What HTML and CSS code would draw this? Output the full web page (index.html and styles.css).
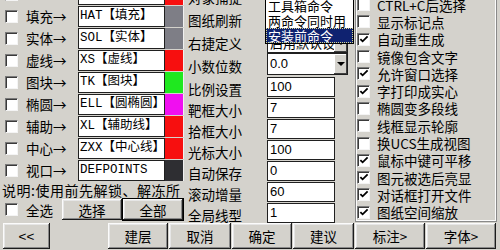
FILE: index.html
```html
<!DOCTYPE html>
<html lang="zh-CN">
<head>
<meta charset="utf-8">
<title>设置</title>
<link rel="stylesheet" href="styles.css">
</head>
<body>
<div class="dlg">
  <div class="main">
    <div class="col-l">
      <div class="layers">
        <div class="lrow"><span class="cb"></span><span class="lbl">&nbsp;</span><span class="tb">&nbsp;</span><span class="sw c-red"></span></div>
        <div class="lrow"><span class="cb"></span><span class="lbl">填充→</span><span class="tb">HAT【填充】</span><span class="sw c-gray"></span></div>
        <div class="lrow"><span class="cb"></span><span class="lbl">实体→</span><span class="tb">SOL【实体】</span><span class="sw c-gray"></span></div>
        <div class="lrow"><span class="cb"></span><span class="lbl">虚线→</span><span class="tb">XS【虚线】</span><span class="sw c-red"></span></div>
        <div class="lrow"><span class="cb"></span><span class="lbl">图块→</span><span class="tb">TK【图块】</span><span class="sw c-green"></span></div>
        <div class="lrow"><span class="cb"></span><span class="lbl">椭圆→</span><span class="tb">ELL【圆椭圆】</span><span class="sw c-mag"></span></div>
        <div class="lrow"><span class="cb"></span><span class="lbl">辅助→</span><span class="tb">XL【辅助线】</span><span class="sw c-red"></span></div>
        <div class="lrow"><span class="cb"></span><span class="lbl">中心→</span><span class="tb">ZXX【中心线】</span><span class="sw c-red"></span></div>
        <div class="lrow"><span class="cb"></span><span class="lbl">视口→</span><span class="tb">DEFPOINTS</span><span class="sw c-dark"></span></div>
      </div>
      <div class="note">说明:使用前先解锁、解冻所</div>
      <div class="selrow">
        <span class="cb"></span><span class="sel-lbl">全选</span>
        <span class="btn b-sel">选择</span>
        <span class="btn b-all">全部</span>
      </div>
    </div>

    <div class="col-m">
      <div class="mgrid">
        <span class="mlbl">对象捕捉</span><span class="combo"><span class="val">&nbsp;</span><span class="arr"></span></span>
        <span class="mlbl">图纸刷新</span><span class="combo"><span class="val">&nbsp;</span><span class="arr"></span></span>
        <span class="mlbl">右捷定义</span><span class="combo c-low"><span class="val">启用默认设置</span><span class="arr"></span></span>
        <span class="mlbl">小数位数</span><span class="combo"><span class="val num-t">0.0</span><span class="arr"></span></span>
        <span class="mlbl">比例设置</span><span class="num">100</span>
        <span class="mlbl">靶框大小</span><span class="num">7</span>
        <span class="mlbl">拾框大小</span><span class="num">7</span>
        <span class="mlbl">光标大小</span><span class="num">100</span>
        <span class="mlbl">自动保存</span><span class="num">0</span>
        <span class="mlbl">滚动增量</span><span class="num">60</span>
        <span class="mlbl">全局线型</span><span class="num">1</span>
      </div>
      <div class="dlist">
        <div class="item">工具箱命令</div>
        <div class="item">两命令同时用</div>
        <div class="item hi">安装前命令</div>
      </div>
    </div>

    <div class="col-r">
      <div class="clist">
        <div class="crow"><span class="cb"></span><span class="clbl">CTRL+C后选择</span></div>
        <div class="crow"><span class="cb"></span><span class="clbl">显示标记点</span></div>
        <div class="crow"><span class="cb"><svg viewBox="0 0 11 11" width="11" height="11"><polyline points="1.5,5 4,7.5 9.5,2" fill="none" stroke="#000" stroke-width="2"/></svg></span><span class="clbl">自动重生成</span></div>
        <div class="crow"><span class="cb"></span><span class="clbl">镜像包含文字</span></div>
        <div class="crow"><span class="cb"><svg viewBox="0 0 11 11" width="11" height="11"><polyline points="1.5,5 4,7.5 9.5,2" fill="none" stroke="#000" stroke-width="2"/></svg></span><span class="clbl">允许窗口选择</span></div>
        <div class="crow"><span class="cb"><svg viewBox="0 0 11 11" width="11" height="11"><polyline points="1.5,5 4,7.5 9.5,2" fill="none" stroke="#000" stroke-width="2"/></svg></span><span class="clbl">字打印成实心</span></div>
        <div class="crow"><span class="cb"></span><span class="clbl">椭圆变多段线</span></div>
        <div class="crow"><span class="cb"></span><span class="clbl">线框显示轮廓</span></div>
        <div class="crow"><span class="cb"></span><span class="clbl">换UCS生成视图</span></div>
        <div class="crow"><span class="cb"><svg viewBox="0 0 11 11" width="11" height="11"><polyline points="1.5,5 4,7.5 9.5,2" fill="none" stroke="#000" stroke-width="2"/></svg></span><span class="clbl">鼠标中键可平移</span></div>
        <div class="crow"><span class="cb"><svg viewBox="0 0 11 11" width="11" height="11"><polyline points="1.5,5 4,7.5 9.5,2" fill="none" stroke="#000" stroke-width="2"/></svg></span><span class="clbl">图元被选后亮显</span></div>
        <div class="crow"><span class="cb"><svg viewBox="0 0 11 11" width="11" height="11"><polyline points="1.5,5 4,7.5 9.5,2" fill="none" stroke="#000" stroke-width="2"/></svg></span><span class="clbl">对话框打开文件</span></div>
        <div class="crow"><span class="cb"><svg viewBox="0 0 11 11" width="11" height="11"><polyline points="1.5,5 4,7.5 9.5,2" fill="none" stroke="#000" stroke-width="2"/></svg></span><span class="clbl">图纸空间缩放</span></div>
      </div>
    </div>
  </div>

  <div class="bar">
    <span class="btn b-back">&lt;&lt;</span>
    <span class="btn b-first">建层</span>
    <span class="btn">取消</span>
    <span class="btn">确定</span>
    <span class="btn">建议</span>
    <span class="btn">标注&gt;</span>
    <span class="btn">字体&gt;</span>
  </div>
</div>
</body>
</html>
```

FILE: styles.css
```css
* { box-sizing: border-box; }
html, body { margin: 0; padding: 0; }
body {
  width: 500px;
  height: 250px;
  overflow: hidden;
  background: #d4d2cc;
  font-family: "Noto Sans CJK SC", sans-serif;
  font-size: 13.5px;
  color: #000;
}
.dlg { display: flex; flex-direction: column; height: 250px; }
.main { display: flex; height: 223px; overflow: hidden; }

/* checkbox */
.cb {
  flex: none;
  width: 13px;
  height: 13px;
  background: #fff;
  border: 1px solid;
  border-color: #7a7a7a #f4f4f4 #f4f4f4 #7a7a7a;
  box-shadow: inset 1px 1px #3a3a3a;
  display: flex;
  align-items: center;
  justify-content: center;
}
.cb svg { display: block; margin: 0 0 0 1px; }

/* left column */
.col-l { width: 187px; flex: none; display: flex; flex-direction: column; overflow: hidden; }
.layers { margin-top: -16px; display: flex; flex-direction: column; }
.lrow { display: flex; align-items: center; height: 21px; margin-bottom: 1px; }
.lrow .cb { margin-left: 5px; }
.lbl { width: 52px; margin-left: 8px; white-space: nowrap; line-height: 21px; }
.tb {
  width: 87px;
  height: 21px;
  background: #fff;
  border: 1px solid #202020;
  font-family: "Liberation Mono", "Noto Sans CJK SC", monospace;
  font-size: 12.5px;
  line-height: 19px;
  padding-left: 1px;
  white-space: nowrap;
  overflow: hidden;
}
.sw { width: 19px; height: 21px; border-right: 1px solid #f0f0f0; }
.c-red { background: #f70f0f; }
.c-gray { background: #7e7e86; }
.c-green { background: #1fe81f; }
.c-mag { background: #f00ff0; }
.c-dark { background: #2e2e32; }

.note {
  height: 16px;
  line-height: 16px;
  font-size: 14px;
  letter-spacing: 0.5px;
  padding-left: 2px;
  white-space: nowrap;
}
.selrow { display: flex; align-items: center; height: 23px; }
.selrow .cb { margin-left: 5px; }
.sel-lbl { width: 36px; margin-left: 8px; }

/* buttons */
.btn {
  display: flex;
  align-items: center;
  justify-content: center;
  background: #d4d2cc;
  box-shadow: inset -1px -1px #1c1c1c, inset 1px 1px #fbfbfb, inset -2px -2px #8a8a8a, inset 2px 2px #e6e6e6;
  white-space: nowrap;
}
.b-sel { width: 60px; height: 21px; }
.b-all { width: 62px; height: 23px; border: 1px solid #000; }

/* middle column */
.col-m { width: 168px; flex: none; position: relative; }
.mgrid {
  display: grid;
  grid-template-columns: 80px 88px;
  grid-template-rows: 23px 23px 23px 24px repeat(7, 21px);
  margin-top: -16px;
}
.mlbl { display: flex; align-items: center; padding: 2px 0 0 1px; white-space: nowrap; }
.num {
  align-self: start;
  width: 68px;
  height: 20px;
  background: #fff;
  border: 1px solid #202020;
  font-family: "Liberation Sans", sans-serif;
  font-size: 13px;
  line-height: 18px;
  padding-left: 2px;
}
.combo {
  align-self: start;
  width: 81px;
  height: 22px;
  display: flex;
  background: #fff;
  border: 1px solid #202020;
}
.c-low { margin-top: 2px; height: 21px; }
.combo .val { flex: 1; padding-left: 2px; line-height: 19px; white-space: nowrap; overflow: hidden; font-size: 13px; }
.combo .num-t { font-family: "Liberation Sans", sans-serif; }
.arr {
  flex: none;
  width: 13px;
  background: #d4d2cc;
  box-shadow: inset -1px -1px #404040, inset 1px 1px #fff;
  display: flex;
  align-items: center;
  justify-content: center;
}
.arr::after {
  content: "";
  border-left: 4px solid transparent;
  border-right: 4px solid transparent;
  border-top: 4px solid #000;
}
.dlist {
  position: absolute;
  left: 78px;
  top: -3px;
  width: 89px;
  background: #fff;
  border: 1px solid #000;
  font-size: 13px;
}
.item { height: 15px; line-height: 15px; padding-left: 2px; white-space: nowrap; }
.item.hi { background: #0f2270; color: #fff; outline: 1px dotted #d8d890; outline-offset: -1px; }

/* right column */
.col-r {
  width: 142px;
  height: 222px;
  flex: none;
  border: 1px solid #8a8a8a;
  border-top: none;
  box-shadow: inset 1px 0 #fbfbfb, inset -1px -1px #fbfbfb;
  overflow: hidden;
}
.clist { margin-top: -4px; padding-left: 1px; }
.crow { display: flex; align-items: center; height: 17.3px; }
.clbl { margin-left: 7px; white-space: nowrap; }

/* bottom bar */
.bar {
  display: grid;
  grid-template-columns: 47px 60px 62px 60px 61px 70px 70px;
  column-gap: 1px;
  padding-left: 3px;
  height: 27px;
}
.bar .btn { height: 26px; }
.bar .btn:nth-child(n+2) { margin-left: 57px; margin-right: -57px; }
.b-back { font-family: "Liberation Sans", sans-serif; }
```
